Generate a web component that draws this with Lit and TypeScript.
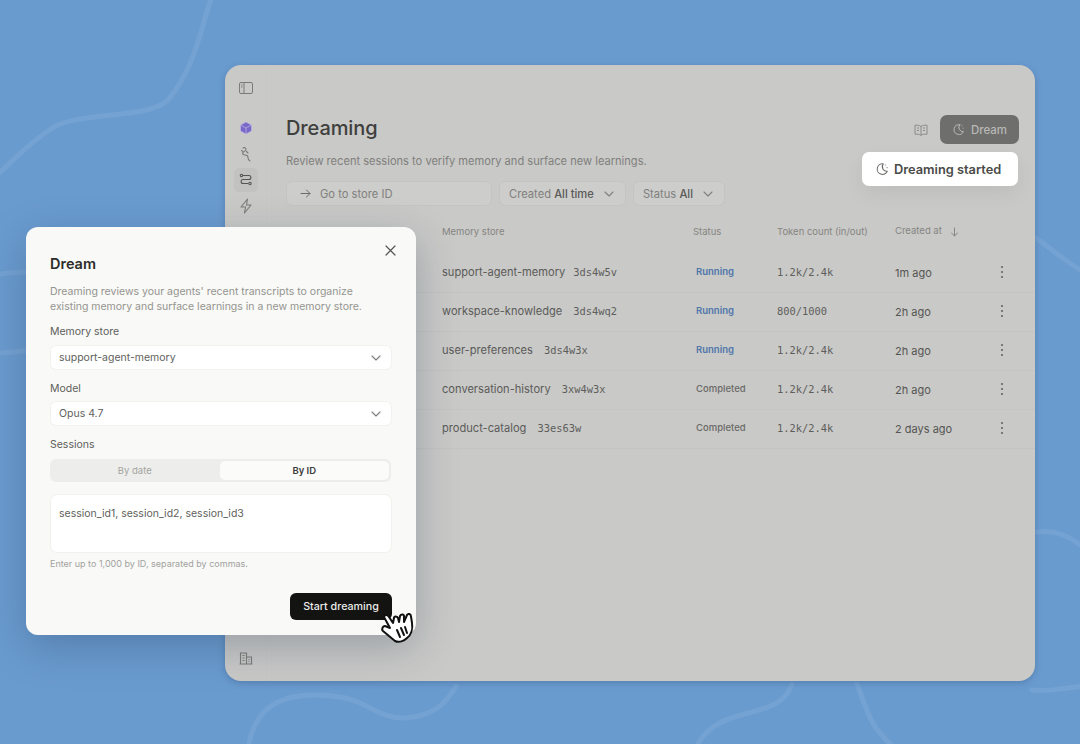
import { LitElement, html, css, svg } from "lit";
import { customElement } from "lit/decorators.js";

const moon = (size: number) => html`<svg width=${size} height=${size} viewBox="0 0 16 16" fill="none" stroke="currentColor" stroke-width="1.2" stroke-linecap="round" stroke-linejoin="round"><path d="M9.5 2.2A6 6 0 1 0 14 10.6 5.2 5.2 0 0 1 9.5 2.2Z"/><path d="M12.2 3.4v.1M13.8 6.4v.1"/></svg>`;
const chevron = html`<svg width="12" height="12" viewBox="0 0 12 12" fill="none" stroke="currentColor" stroke-width="1.1" stroke-linecap="round" stroke-linejoin="round"><path d="M2 4l4 4 4-4"/></svg>`;
const dots = html`<svg width="4" height="14" viewBox="0 0 4 14" fill="currentColor"><circle cx="2" cy="2" r="1.1"/><circle cx="2" cy="7" r="1.1"/><circle cx="2" cy="12" r="1.1"/></svg>`;

const rows = [
  ["support-agent-memory", "3ds4w5v", "Running", "1.2k/2.4k", "1m ago"],
  ["workspace-knowledge", "3ds4wq2", "Running", "800/1000", "2h ago"],
  ["user-preferences", "3ds4w3x", "Running", "1.2k/2.4k", "2h ago"],
  ["conversation-history", "3xw4w3x", "Completed", "1.2k/2.4k", "2h ago"],
  ["product-catalog", "33es63w", "Completed", "1.2k/2.4k", "2 days ago"],
];

const curves = [
  "M212 -4C200 30 196 66 168 100C150 118 90 112 60 124C36 136 16 158 -4 176",
  "M456 686C448 700 436 716 406 718C380 720 366 700 340 697C290 690 256 700 248 748",
  "M792 684C784 706 766 708 738 716C716 722 702 734 696 748",
  "M857 684C866 706 868 726 895 748",
  "M1032 690C1048 692 1064 688 1084 686",
  "M1036 238C1050 248 1066 262 1084 272",
  "M1036 532C1050 530 1066 532 1084 548",
  "M-4 274C6 274 16 272 28 272",
  "M-4 353C6 353 16 352 28 350",
];

@customElement("app-root")
export class AppRoot extends LitElement {
  static styles = css`
    :host { display: block; width: 1080px; height: 744px; overflow: hidden; font-family: Inter, "Noto Sans", sans-serif; }
    * { box-sizing: border-box; }
    .stage { position: relative; width: 1080px; height: 744px; background: #6a9bcf; overflow: hidden; }
    .bg { position: absolute; inset: 0; }
    .bg path { fill: none; stroke: #74a2d2; stroke-width: 5; stroke-linecap: round; }
    .window { position: absolute; left: 225px; top: 65px; width: 810px; height: 616px; background: #c9c9c7; border-radius: 16px; box-shadow: 0 2px 6px rgba(50,80,120,.35); display: flex; }
    .side { width: 42px; padding: 17px 0 16px; display: flex; flex-direction: column; align-items: center; color: #7b7b78; border-right: 1px solid #c7c7c5; }
    .side svg { display: block; }
    .side .stack { margin-top: 22px; display: flex; flex-direction: column; align-items: center; gap: 2px; }
    .side .item { width: 24px; height: 24px; display: flex; align-items: center; justify-content: center; border-radius: 5px; }
    .side .item.on { background: #c2c2c0; color: #555; }
    .side .item.pick { color: #7a68c8; }
    .side .foot { margin-top: auto; }
    .main { flex: 1; padding: 49px 16px 0 19px; min-width: 0; display: flex; flex-direction: column; }
    .top { display: flex; align-items: flex-start; justify-content: space-between; height: 30px; }
    h1 { margin: -1px 0 0; font-size: 20px; line-height: 30px; font-weight: 500; color: #3f3f3d; letter-spacing: -.1px; }
    .actions { display: flex; align-items: center; gap: 12px; color: #8a8a87; margin-top: 1px; }
    .dream { display: flex; align-items: center; gap: 6px; width: 79px; height: 29px; justify-content: center; background: #6e6e6c; color: #b9b9b6; border-radius: 7px; font-size: 11.5px; font-weight: 500; }
    .sub { font-size: 11.1px; line-height: 16px; color: #80807d; margin-top: 9px; }
    .toast { position: absolute; left: 637px; top: 87px; width: 156px; height: 34px; background: #fff; border-radius: 7px; display: flex; align-items: center; gap: 5px; padding-left: 13px; font-size: 12.8px; font-weight: 600; color: #4a4a48; box-shadow: 0 8px 20px rgba(0,0,0,.06); white-space: nowrap; }
    .toast svg { color: #6a6a68; flex: none; }
    .filters { display: flex; gap: 7px; margin-top: 12px; font-size: 11.2px; color: #80807d; }
    .field { height: 25px; border-radius: 6px; background: #cdcdcb; border: 1px solid #c4c4c2; display: flex; align-items: center; }
    .go { width: 206px; padding-left: 13px; gap: 9px; }
    .go svg { color: #6a6a68; }
    .pill { padding: 0 10px 0 9px; gap: 9px; }
    .pill b { font-weight: 500; color: #5a5a58; }
    .table { margin-top: 10px; margin-right: -16px; }
    .row { display: grid; grid-template-columns: 156px 251px 84px 118px 96px 1fr; align-items: center; height: 39px; padding-bottom: 3px; border-bottom: 1px solid #c4c4c2; }
    .head { height: 30px; padding-bottom: 0; border-bottom: none; font-size: 9.5px; color: #858582; margin-bottom: 8px; }
    .name { font-size: 11.1px; color: #5b5b59; display: flex; gap: 11px; align-items: center; }
    .row:nth-child(2) .name { gap: 8px; }
    .code, .tok { font-family: "DejaVu Sans Mono", "Liberation Mono", monospace; font-size: 10.4px; color: #5e5e5c; }
    .status { font-size: 9.5px; font-weight: 600; margin-left: 3px; }
    .status.run { color: #4f76aa; }
    .status.done { color: #6a6a68; font-weight: 500; }
    .when { font-size: 11px; color: #555553; padding-top: 2px; }
    .sort { display: inline-flex; margin-left: 8px; vertical-align: middle; }
    .menu { display: flex; color: #666664; padding-left: 9px; }
    .modal { position: absolute; left: 26px; top: 227px; width: 390px; height: 408px; background: #f9f9f7; border-radius: 12px; padding: 25px 24px 0; box-shadow: 0 12px 40px rgba(30,50,80,.28); display: flex; flex-direction: column; }
    .close { position: absolute; top: 18px; right: 20px; color: #555553; }
    .close svg { display: block; }
    h2 { margin: 0; font-size: 14.5px; line-height: 24px; font-weight: 600; color: #2c2c2a; }
    .desc { margin: 8px 0 0; font-size: 10.5px; line-height: 15px; color: #94948f; }
    .lab { font-size: 10.5px; line-height: 14px; color: #5e5e5b; }
    .group { margin-top: 13px; display: flex; flex-direction: column; gap: 6px; }
    .group.first { margin-top: 11px; gap: 7px; }
    .group.last { gap: 7px; }
    .select { height: 23px; background: #fff; border-radius: 5px; margin: 0 1px; padding: 0 9px 0 8px; display: flex; align-items: center; justify-content: space-between; font-size: 10.5px; color: #5f5f5c; box-shadow: 0 0 0 1px #f1f1ee; }
    .select svg { color: #7d7d7a; }
    .tabs { height: 23px; background: #ededeb; border-radius: 6px; display: grid; grid-template-columns: 1fr 1fr; font-size: 9.5px; padding: 2px 2px 2px 0; margin-right: 1px; text-align: center; }
    .tabs div { display: flex; align-items: center; justify-content: center; color: #a5a5a1; }
    .tabs .act { background: #fbfbf9; border-radius: 5px; color: #3c3c3a; font-weight: 600; }
    .area { margin: 13px 1px 0; height: 57px; background: #fff; border-radius: 6px; box-shadow: 0 0 0 1px #f1f1ee; padding: 12px 8px; font-size: 10.5px; line-height: 14px; color: #5f5f5c; }
    .hint { margin-top: 6px; font-size: 9px; line-height: 12px; color: #a2a29e; }
    .foot-row { margin-top: 23px; display: flex; justify-content: flex-end; }
    .start { width: 102px; height: 27px; background: #131312; color: #ecece9; border-radius: 6px; display: flex; align-items: center; justify-content: center; font-size: 10.7px; font-weight: 500; }
    .hand { position: absolute; left: 380px; top: 609px; }
  `;

  render() {
    return html`
      <div class="stage">
        <svg class="bg" width="1080" height="744" viewBox="0 0 1080 744">
          ${curves.map((d) => svg`<path d=${d}></path>`)}
        </svg>
        <div class="window">
          <div class="side">
            <svg width="14" height="12" viewBox="0 0 14 12" fill="none" stroke="currentColor" stroke-width="1"><rect x=".5" y=".5" width="13" height="11" rx="1.5"/><path d="M5 .5v11M2 3h1.5M2 5h1.5"/></svg>
            <div class="stack">
              <div class="item pick"><svg width="14" height="14" viewBox="0 0 14 14" fill="#7a68c8" stroke="#b9b2df" stroke-width=".8" stroke-linejoin="round"><path d="M7 1l5.5 3v6L7 13l-5.5-3V4z"/><path d="M1.5 4L7 7l5.5-3M7 7v6" fill="none"/></svg></div>
              <div class="item"><svg width="14" height="16" viewBox="0 0 14 16" fill="none" stroke="currentColor" stroke-width="1.1" stroke-linecap="round" stroke-linejoin="round"><path d="M4 2c1.500-1 3 0 3 1.500S5 5.500 4 6.500s0 2.500 2 2.500 3 1 3 2.500 1 3 2 3.500"/><path d="M7.500 5.500l1.500 1.500M2.500 4.500l1.500 1"/></svg></div>
              <div class="item on"><svg width="14" height="14" viewBox="0 0 14 14" fill="none" stroke="currentColor" stroke-width="1.1" stroke-linecap="round"><circle cx="2.500" cy="2.500" r="1.200"/><path d="M4 2.500h6c2.500 0 2.500 4 0 4H4c-2.500 0-2.500 4 0 4h5"/><circle cx="11" cy="10.500" r="1.200"/></svg></div>
              <div class="item"><svg width="14" height="16" viewBox="0 0 14 16" fill="none" stroke="currentColor" stroke-width="1.100" stroke-linejoin="round"><path d="M8.500 1L2 9h4.500L5.500 15 12 7H7.500z"/></svg></div>
            </div>
            <div class="foot"><svg width="14" height="14" viewBox="0 0 14 14" fill="none" stroke="currentColor" stroke-width="1.100"><path d="M1.500 13V2h6v11M7.500 6h5v7M.5 13h13M3.500 4.500h2M3.500 7h2M3.500 9.500h2M9.500 8.500h1M9.500 10.500h1"/></svg></div>
          </div>
          <div class="main">
            <div class="top">
              <h1>Dreaming</h1>
              <div class="actions">
                <svg width="14" height="12" viewBox="0 0 14 12" fill="none" stroke="currentColor" stroke-width="1"><path d="M7 2.500C5.500 1.200 3 1 1 1.200v9C3 10 5.500 10.200 7 11.300 8.500 10.200 11 10 13 10.200v-9C11 1 8.500 1.200 7 2.500zM7 2.500v8.800M3 4h2M3 6.500h2M9 4h2M9 6.500h2"/></svg>
                <div class="dream">${moon(13)}Dream</div>
              </div>
            </div>
            <div class="sub">Review recent sessions to verify memory and surface new learnings.</div>
            <div class="filters">
              <div class="field go">
                <svg width="11" height="11" viewBox="0 0 11 11" fill="none" stroke="currentColor" stroke-width="1" stroke-linecap="round" stroke-linejoin="round"><path d="M1 5.500h9M6.500 2l3.500 3.500L6.500 9"/></svg>
                Go to store ID
              </div>
              <div class="field pill"><span>Created <b>All time</b></span>${chevron}</div>
              <div class="field pill"><span>Status <b>All</b></span>${chevron}</div>
            </div>
            <div class="table">
              <div class="row head">
                <span></span><span>Memory store</span><span>Status</span><span>Token count (in/out)</span>
                <span>Created at<span class="sort"><svg width="9" height="10" viewBox="0 0 9 10" fill="none" stroke="currentColor" stroke-width="1" stroke-linecap="round" stroke-linejoin="round"><path d="M4.500 1v8M1.500 6l3 3 3-3"/></svg></span></span>
                <span></span>
              </div>
              ${rows.map((r) => html`
                <div class="row">
                  <span></span>
                  <div class="name"><span>${r[0]}</span><span class="code">${r[1]}</span></div>
                  <span class="status ${r[2] === "Running" ? "run" : "done"}">${r[2]}</span>
                  <span class="tok">${r[3]}</span>
                  <span class="when">${r[4]}</span>
                  <div class="menu">${dots}</div>
                </div>`)}
            </div>
          </div>
          <div class="toast">${moon(14)}Dreaming started</div>
        </div>
        <div class="modal">
          <div class="close"><svg width="11" height="11" viewBox="0 0 11 11" fill="none" stroke="currentColor" stroke-width="1.200" stroke-linecap="round"><path d="M1 1l9 9M10 1l-9 9"/></svg></div>
          <h2>Dream</h2>
          <p class="desc">Dreaming reviews your agents' recent transcripts to organize existing memory and surface learnings in a new memory store.</p>
          <div class="group first"><div class="lab">Memory store</div><div class="select">support-agent-memory ${chevron}</div></div>
          <div class="group"><div class="lab">Model</div><div class="select">Opus 4.7 ${chevron}</div></div>
          <div class="group last"><div class="lab">Sessions</div>
            <div class="tabs"><div>By date</div><div class="act">By ID</div></div>
          </div>
          <div class="area">session_id1, session_id2, session_id3</div>
          <div class="hint">Enter up to 1,000 by ID, separated by commas.</div>
          <div class="foot-row"><div class="start">Start dreaming</div></div>
        </div>
        <svg class="hand" width="36" height="38" viewBox="0 0 36 38" fill="#fff" stroke="#111" stroke-width="2" stroke-linejoin="round" stroke-linecap="round">
          <path d="M4 8C5 5 8 6 9 8L13 14L14 9C14 7 17 7 18 9L19 13L20 7C21 5 24 5 24 7.500L24 13L27 6C28 4 31 5 31 7.500L32 14C33 20 31 26 27 29C24 32 19 34 15 32L3 22C1 20 3 17 5 17L10 19Z"/>
          <path d="M17 21l3 7M21 19l3 7M25 18l2 6" fill="none"/>
        </svg>
      </div>
    `;
  }
}
